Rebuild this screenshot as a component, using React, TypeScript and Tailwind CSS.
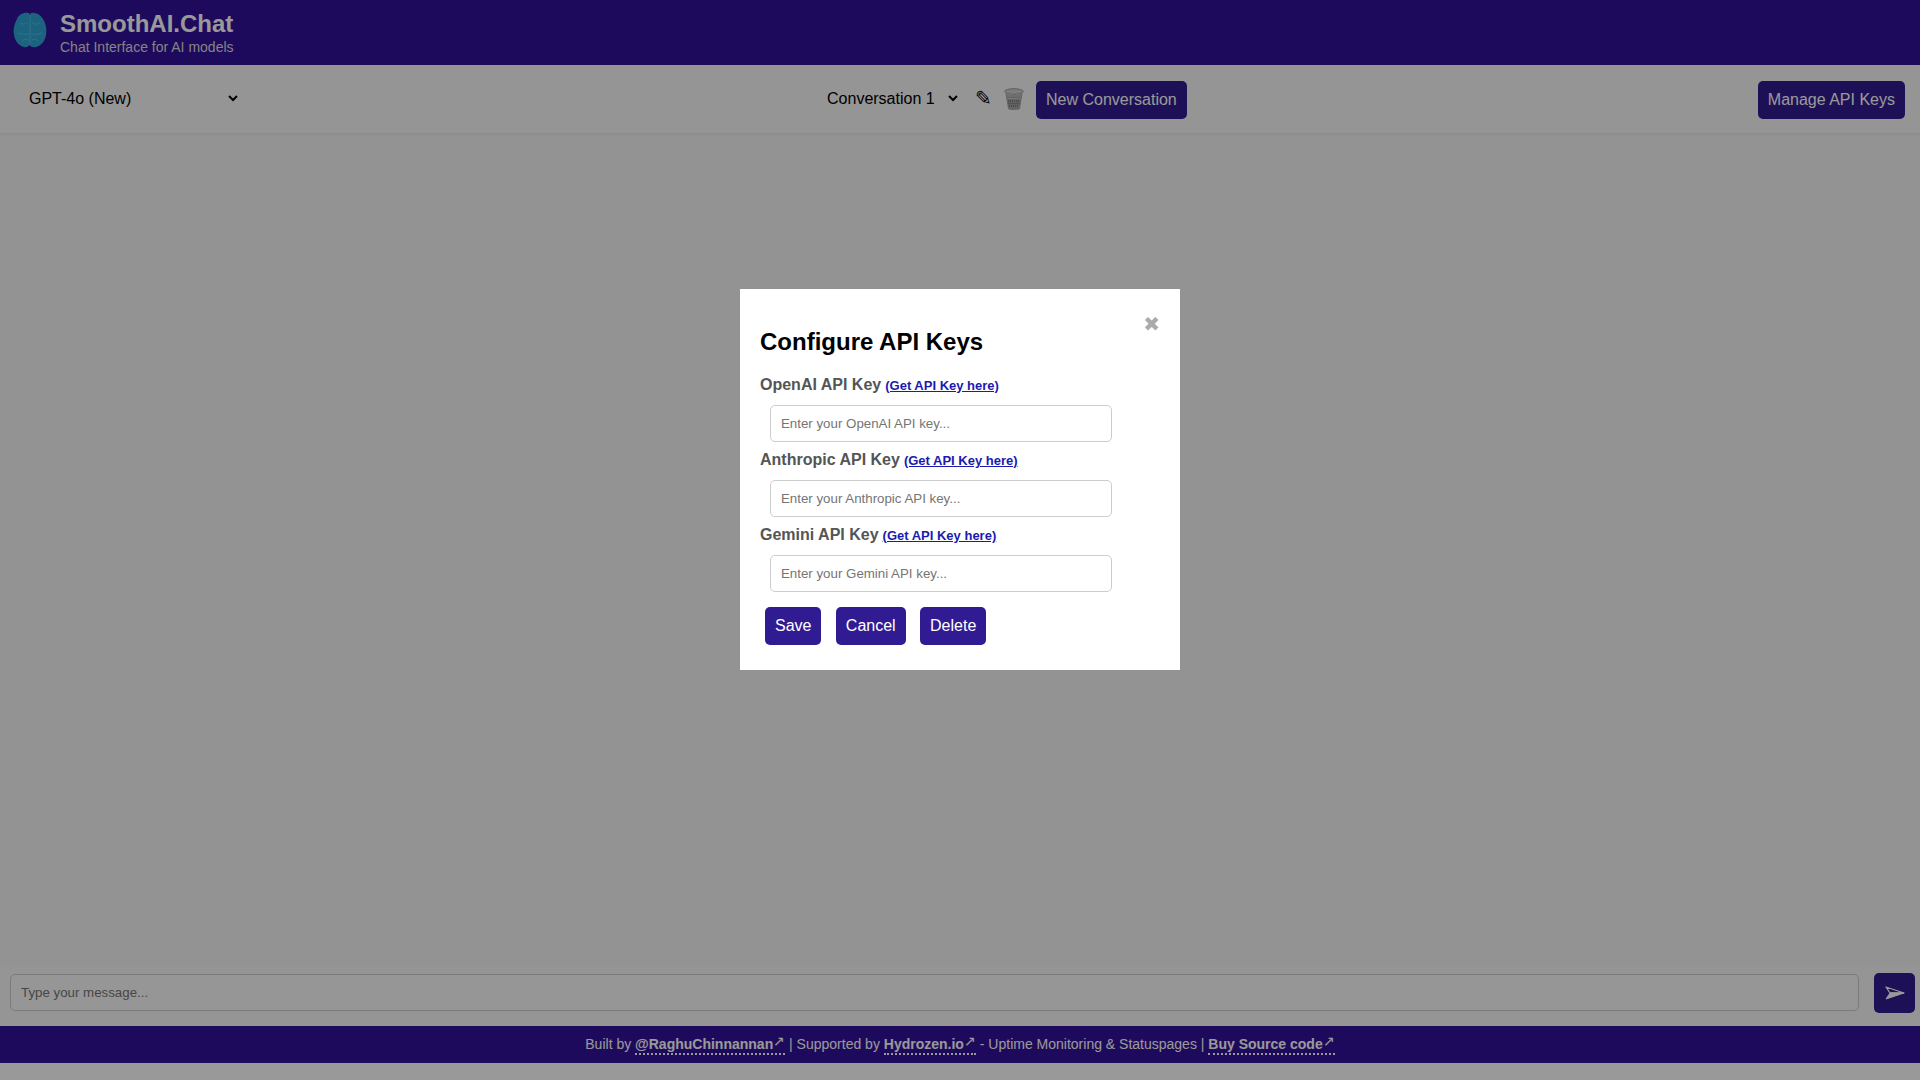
const fontStack = "font-['Liberation_Sans',Arial,sans-serif]";

const BrainLogo = () => (
  <svg width="36" height="38" viewBox="0 0 36 38" className="-mt-[5px] shrink-0">
    <path
      d="M17 2C12 1 7 3 5 8C2 13 1 19 2 24C3 30 7 35 12 36C14 36.500 16 36 17.500 34C19 36 21 36.500 24 36C29 35 33 30 34 24C35 18 34 13 31 8C28 3 23 1 19 2L18 4Z"
      fill="#2ea6d4"
    />
    <path
      d="M18 4V34M8 12C11 14 14 13 16 11M28 12C25 14 22 13 20 11M6 22C10 24 14 23 17 23M30 22C26 24 22 23 19 23M10 30C12 28 14 28 16 29M26 30C24 28 22 28 20 29"
      stroke="#4cc0e4"
      strokeWidth="1"
      fill="none"
    />
  </svg>
);

const TrashIcon = () => (
  <svg width="20" height="23" viewBox="0 0 20 23" className="block shrink-0">
    <ellipse cx="10" cy="3.500" rx="9.300" ry="2.800" fill="#d0d0d0" stroke="#9a9a9a" />
    <path d="M1.500 5.500L4 20.500C4.500 22.500 15.500 22.500 16 20.500L18.500 5.500C15 7.500 5 7.500 1.500 5.500Z" fill="#a8a8a8" />
    <path d="M3 8L17 8M3.500 10.500L16.500 10.500" stroke="#c6c6c6" strokeWidth="1" />
    <path d="M4 13H16M4.500 15.500H15.500M5 18H15" stroke="#6e6e6e" strokeWidth="1.500" strokeDasharray="1 1" />
  </svg>
);

const PurpleButton = ({ children }: { children: React.ReactNode }) => (
  <button className="h-[38px] rounded-[5px] bg-[#311b92] px-[10px] text-base text-white">{children}</button>
);

const FooterLink = ({ children }: { children: React.ReactNode }) => (
  <a className="border-b-2 border-dotted border-white pb-[1px] font-bold text-white">
    {children}
    <span className="relative -top-[3px] text-[14px] font-normal">↗</span>
  </a>
);

const KeyField = ({ name, placeholder }: { name: string; placeholder: string }) => (
  <div>
    <div className="flex h-[18px] items-center gap-[4px]">
      <span className="text-base font-bold text-[#555555]">{name}</span>
      <a className="mt-[1px] text-[13px] font-bold text-[#1a1ab0] underline">(Get API Key here)</a>
    </div>
    <input
      placeholder={placeholder}
      className="mx-[10px] mt-[11px] mb-[9px] block h-[37px] w-[342px] rounded-[5px] border border-[#cccccc] bg-white px-[10px] text-[13.300px] placeholder:text-[#757575]"
    />
  </div>
);

const App = () => {
  return (
    <div className={`${fontStack} flex h-screen flex-col bg-[#f5f5f5]`}>
      <header className="flex h-[65px] items-center gap-[12px] bg-[#33119a] pb-[1px] pl-[12px]">
        <BrainLogo />
        <div>
          <div className="text-2xl leading-[28px] font-bold text-white">SmoothAI.Chat</div>
          <div className="mt-[1px] text-sm leading-[16px] text-[#dddddd]">Chat Interface for AI models</div>
        </div>
      </header>

      <div className="flex h-[68px] items-center justify-between bg-[#f8f8f8] pt-[1px] pr-[15px] pl-[25px] shadow-[0_1px_3px_rgba(0,0,0,0.08)]">
        <select className="-mt-[3px] w-[216px] bg-transparent text-base text-black outline-none">
          <option>GPT-4o (New)</option>
        </select>
        <div className="flex items-center pl-[11px]">
          <select className="-mt-[3px] mr-[14px] w-[138px] bg-transparent text-base text-black outline-none">
            <option>Conversation 1</option>
          </select>
          <span className="mr-[12px] -mt-[3px] text-xl leading-none text-black">✎</span>
          <span className="mr-[12px]">
            <TrashIcon />
          </span>
          <PurpleButton>New Conversation</PurpleButton>
        </div>
        <PurpleButton>Manage API Keys</PurpleButton>
      </div>

      <main className="flex-1" />

      <div className="flex items-center gap-[15px] bg-[#f9f9f9] pt-[6px] pr-[5px] pl-[10px]">
        <input
          placeholder="Type your message..."
          className="mb-[2px] h-[37px] flex-1 rounded-[5px] border border-[#cccccc] bg-[#fbfbfb] px-[10px] text-[13.300px] placeholder:text-[#757575]"
        />
        <button className="flex h-[40px] w-[41px] items-center justify-center rounded-[5px] bg-[#311b92]">
          <svg width="20" height="14" viewBox="0 0 20 14">
            <path d="M1 1L19 7L5 7Z" fill="none" stroke="#ffffff" strokeWidth="1.300" strokeLinejoin="round" />
            <path d="M1 13L19 7L5 7Z" fill="#ffffff" stroke="#ffffff" strokeWidth="1" strokeLinejoin="round" />
          </svg>
        </button>
      </div>

      <div className="h-[13px] shrink-0 bg-[#f9f9f9]" />
      <footer className="h-[37px] shrink-0 bg-[#33119a] pt-[9px] text-center text-sm leading-[18px] text-white">
        Built by <FooterLink>@RaghuChinnannan</FooterLink> | Supported by <FooterLink>Hydrozen.io</FooterLink> - Uptime
        Monitoring &amp; Statuspages | <FooterLink>Buy Source code</FooterLink>
      </footer>
      <div className="h-[17px] shrink-0 bg-white" />

      {/* modal overlay */}
      <div className="fixed inset-0 bg-black/40">
        <div className="relative mx-auto mt-[289px] w-[440px] bg-white p-[20px] pb-[25px] text-black">
          <button className="absolute top-[17px] right-[20px] font-['DejaVu_Sans'] text-[20px] leading-[36px] font-bold text-[#aaaaaa]">
            ✖
          </button>
          <h2 className="mt-[19px] mb-[20px] text-2xl leading-[28px] font-bold">Configure API Keys</h2>
          <KeyField name="OpenAI API Key" placeholder="Enter your OpenAI API key..." />
          <KeyField name="Anthropic API Key" placeholder="Enter your Anthropic API key..." />
          <KeyField name="Gemini API Key" placeholder="Enter your Gemini API key..." />
          <div className="mt-[15px] flex gap-[14.400px] pl-[5px]">
            <PurpleButton>Save</PurpleButton>
            <PurpleButton>Cancel</PurpleButton>
            <PurpleButton>Delete</PurpleButton>
          </div>
        </div>
      </div>
    </div>
  );
};

export default App;
